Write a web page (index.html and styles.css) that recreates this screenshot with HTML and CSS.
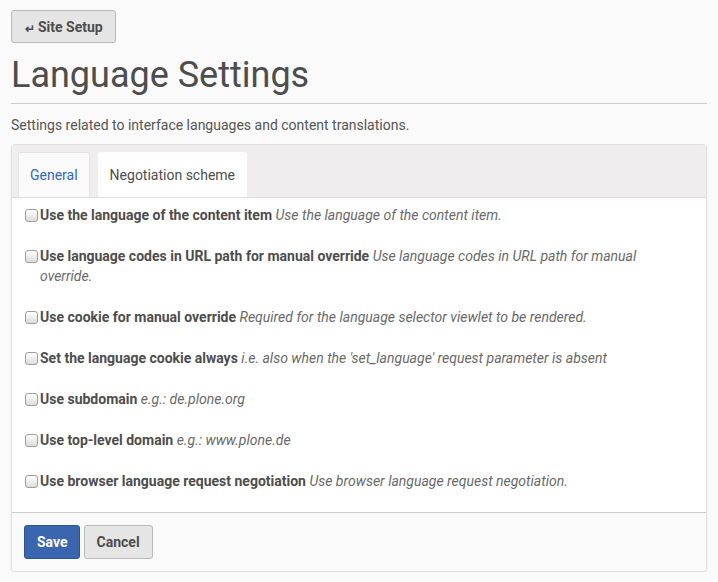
FILE: index.html
```html
<!DOCTYPE html>
<html>
<head>
<meta charset="utf-8">
<link rel="stylesheet" href="styles.css">
</head>
<body>
<div class="page">
  <div class="toolbar"><a class="btn back"><span class="arrow">↵</span> Site Setup</a></div>
  <h1 class="title">Language Settings</h1>
  <p class="desc">Settings related to interface languages and content translations.</p>
  <div class="panel">
    <div class="tabs">
      <a class="tab tab-link">General</a>
      <a class="tab tab-active">Negotiation scheme</a>
    </div>
    <div class="fields">
      <label class="row"><input type="checkbox" class="cb"><span class="txt"><b>Use the language of the content item</b> <i>Use the language of the content item.</i></span></label>
      <label class="row"><input type="checkbox" class="cb"><span class="txt"><b>Use language codes in URL path for manual override</b> <i>Use language codes in URL path for manual override.</i></span></label>
      <label class="row"><input type="checkbox" class="cb"><span class="txt"><b>Use cookie for manual override</b> <i>Required for the language selector viewlet to be rendered.</i></span></label>
      <label class="row"><input type="checkbox" class="cb"><span class="txt"><b>Set the language cookie always</b> <i>i.e. also when the 'set_language' request parameter is absent</i></span></label>
      <label class="row"><input type="checkbox" class="cb"><span class="txt"><b>Use subdomain</b> <i>e.g.: de.plone.org</i></span></label>
      <label class="row"><input type="checkbox" class="cb"><span class="txt"><b>Use top-level domain</b> <i>e.g.: www.plone.de</i></span></label>
      <label class="row"><input type="checkbox" class="cb"><span class="txt"><b>Use browser language request negotiation</b> <i>Use browser language request negotiation.</i></span></label>
    </div>
    <div class="footer">
      <button class="btn primary">Save</button>
      <button class="btn">Cancel</button>
    </div>
  </div>
</div>
</body>
</html>
```

FILE: styles.css
```css
html, body {
  margin: 0;
  padding: 0;
  background: #fafafa;
}
body {
  font-family: Roboto, "Liberation Sans", sans-serif;
  font-size: 14px;
  line-height: 20px;
  color: #4d4d4d;
}
.page {
  padding: 10px 11px 0 11px;
}
.toolbar {
  display: flex;
}
.btn {
  display: inline-flex;
  align-items: center;
  box-sizing: border-box;
  height: 34px;
  padding: 0 12px;
  border: 1px solid #b8b8b8;
  border-radius: 3px;
  background: #e5e5e5;
  color: #4d4d4d;
  font-family: Roboto, "Liberation Sans", sans-serif;
  font-size: 14px;
  font-weight: 700;
  text-decoration: none;
  cursor: pointer;
}
.back {
  height: 33px;
  padding: 0 12px 0 13px;
}
.arrow {
  font-size: 12px;
  margin-right: 3px;
  position: relative;
  top: 2px;
}
.title {
  margin: 10px 0 0 0;
  font-size: 36px;
  line-height: 44px;
  font-weight: 400;
  padding-bottom: 6px;
  border-bottom: 1px solid #cccccc;
}
.desc {
  margin: 11px 0 9px 0;
  color: #555;
}
.panel {
  background: #fff;
  border: 1px solid #e0e0e0;
  border-radius: 4px;
  box-shadow: 0 1px 2px rgba(0,0,0,0.08);
  overflow: hidden;
}
.tabs {
  display: flex;
  gap: 8px;
  height: 45px;
  padding: 7px 0 0 6px;
  background: #efeded;
  border-bottom: 1px solid #dddddd;
  align-items: flex-end;
}
.tab {
  box-sizing: border-box;
  height: 45px;
  display: flex;
  align-items: center;
  padding: 0 11px;
  border-radius: 4px 4px 0 0;
  border: 1px solid #e4e4e4;
  border-bottom: none;
  text-decoration: none;
}
.tab-link {
  background: #fafafa;
  color: #2f68c1;
}
.tab-active {
  background: #fff;
  border-color: #fff;
  color: #4d4d4d;
}
.fields {
  padding: 7px 30px 0 13px;
}
.row {
  display: flex;
  align-items: flex-start;
  gap: 2px;
  margin-bottom: 21px;
}
.cb {
  appearance: none;
  -webkit-appearance: none;
  flex: none;
  width: 13px;
  height: 13px;
  margin: 4px 0 0 0;
  border: 1px solid #9d9d9d;
  border-radius: 3px;
  background: linear-gradient(#ffffff, #dcdcdc);
  box-sizing: border-box;
}
.txt b {
  font-weight: 700;
  color: #4d4d4d;
}
.txt i {
  color: #696969;
}
.footer {
  display: flex;
  gap: 4px;
  padding: 12px 12px 12px 12px;
  background: #fafafa;
  border-top: 1px solid #cccccc;
}
.primary {
  background: #3a66b0;
  border-color: #2c5293;
  color: #fff;
  padding: 0 11px 0 12px;
}
```
